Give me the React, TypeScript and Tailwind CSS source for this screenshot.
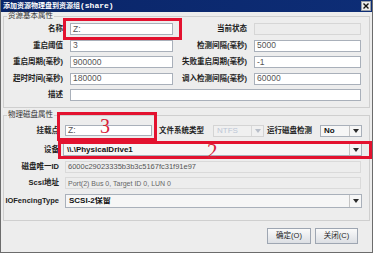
import type { ReactNode } from "react";

const font = "font-['Liberation_Sans','Noto_Sans_CJK_SC',sans-serif]";

function Label({ children, className }: { children: ReactNode; className: string }) {
  return (
    <span className={`shrink-0 whitespace-nowrap text-right text-[7.5px] font-bold leading-none text-[#222] ${className}`}>
      {children}
    </span>
  );
}

function Field({ value, className }: { value?: string; className: string }) {
  return (
    <div className={`flex shrink-0 items-center border border-[#a9b0ba] bg-white pl-[2px] text-[8.5px] leading-none text-[#555] ${className}`}>
      {value}
    </div>
  );
}

function Arrow({ dim }: { dim?: boolean }) {
  return (
    <div className={`flex h-full w-[12px] shrink-0 items-center justify-center border-l ${dim ? "border-[#d8d8d8]" : "border-[#c4c4c4]"}`}>
      <svg width="6" height="4" viewBox="0 0 6 4">
        <path d="M0 0h6L3 4z" fill={dim ? "#b8bec8" : "#2a2a2a"} />
      </svg>
    </div>
  );
}

function Combo({ value, className, dim }: { value: string; className: string; dim?: boolean }) {
  return (
    <div className={`flex shrink-0 items-center border ${dim ? "border-[#d4d4d4] bg-[#f0f0f0]" : "border-[#a9b0ba] bg-[#f6f6f6]"} ${className}`}>
      <span className={`flex-1 truncate pl-[3px] text-[8px] leading-none ${dim ? "text-[#bcc6d6]" : "font-bold text-[#111]"}`}>
        {value}
      </span>
      <Arrow dim={dim} />
    </div>
  );
}

export default function App() {
  return (
    <div className={`relative h-[253px] w-[374px] overflow-hidden bg-white ${font}`}>
      <div className="flex h-[253px] w-[373px] flex-col border-x border-b border-[#6c6c6c] bg-[#ededed]">
        {/* title bar */}
        <div className="flex h-[12px] shrink-0 items-center justify-between bg-gradient-to-r from-[#0a2568] to-[#0d2d76] pl-[2px] pr-[1px]">
          <span className="whitespace-nowrap text-[7px] font-bold leading-none text-white">
            添加资源物理盘到资源组
            <span className="font-['Liberation_Mono',monospace] text-[8px]">(share)</span>
          </span>
          <div className="flex h-[10px] w-[10px] items-center justify-center border border-[#9aa0a8] bg-[#ececec]">
            <svg width="6" height="6" viewBox="0 0 6 6">
              <path d="M0.5 0.5L5.5 5.5M5.5 0.5L0.5 5.5" stroke="#111" strokeWidth="1.4" />
            </svg>
          </div>
        </div>

        <div className="flex flex-col px-[2px]">
          {/* section 1 */}
          <fieldset className="h-[96px] border border-[#cfcfcf] pt-[3px]">
            <legend className="ml-[3px] px-[1px] text-[7.5px] leading-[8px] text-[#333]">资源基本属性</legend>
            <div className="flex flex-col gap-[4.5px]">
              <div className="flex h-[12px] items-center">
                <Label className="w-[59px]">名称</Label>
                <Field className="ml-[7px] h-[12px] w-[103px]" value="Z:" />
                <Label className="w-[74px]">当前状态</Label>
                <div className="ml-[7px] h-[12px] w-[107px] border border-[#d6d6d6] bg-[#ececec]" />
              </div>
              <div className="flex h-[12px] items-center">
                <Label className="w-[59px]">重启阈值</Label>
                <Field className="ml-[7px] h-[12px] w-[103px]" value="3" />
                <Label className="w-[74px]">检测间隔(毫秒)</Label>
                <Field className="ml-[7px] h-[12px] w-[107px]" value="5000" />
              </div>
              <div className="flex h-[12px] items-center">
                <Label className="w-[59px]">重启周期(毫秒)</Label>
                <Field className="ml-[7px] h-[12px] w-[103px]" value="900000" />
                <Label className="w-[74px]">失败重启周期(毫秒)</Label>
                <Field className="ml-[7px] h-[12px] w-[107px]" value="-1" />
              </div>
              <div className="flex h-[12px] items-center">
                <Label className="w-[59px]">超时时间(毫秒)</Label>
                <Field className="ml-[7px] h-[12px] w-[103px]" value="180000" />
                <Label className="w-[74px]">调入检测间隔(毫秒)</Label>
                <Field className="ml-[7px] h-[12px] w-[107px]" value="60000" />
              </div>
              <div className="flex h-[12px] items-center">
                <Label className="w-[59px]">描述</Label>
                <Field className="ml-[7px] h-[12px] w-[291px]" />
              </div>
            </div>
          </fieldset>

          {/* section 2 */}
          <fieldset className="mt-[3px] h-[110px] border border-[#cfcfcf] pt-[6px]">
            <legend className="ml-[3px] px-[1px] text-[7.5px] leading-[8px] text-[#333]">物理磁盘属性</legend>
            <div className="flex h-[11px] items-center">
              <Label className="w-[55px]">挂载点</Label>
              <Field className="ml-[6px] h-[11px] w-[87px]" value="Z:" />
              <Label className="w-[52px]">文件系统类型</Label>
              <Combo className="ml-[9px] h-[12px] w-[51px]" value="NTFS" dim />
              <Label className="w-[48px]">运行磁盘检测</Label>
              <Combo className="ml-[8px] h-[12px] w-[42px]" value="No" />
            </div>
            <div className="mt-[7px] flex h-[13px] items-center">
              <Label className="w-[55px]">设备</Label>
              <Combo className="ml-[4px] h-[13px] w-[299px]" value={"\\\\.\\PhysicalDrive1"} />
            </div>
            <div className="mt-[5px] flex h-[12px] items-center">
              <Label className="w-[55px]">磁盘唯一ID</Label>
              <div className="ml-[6px] flex h-[12px] w-[296px] items-center border border-[#dadada] pl-[2px] text-[7.5px] leading-none text-[#555]">
                6000c29023335b3b3c5167fc31f91e97
              </div>
            </div>
            <div className="mt-[4px] flex h-[12px] items-center">
              <Label className="w-[55px]">Scsi地址</Label>
              <div className="ml-[6px] flex h-[12px] w-[296px] items-center border border-[#dadada] pl-[2px] text-[7px] leading-none text-[#666]">
                Port(2) Bus 0, Target ID 0, LUN 0
              </div>
            </div>
            <div className="mt-[5px] flex h-[14px] items-center">
              <Label className="w-[55px]">IOFencingType</Label>
              <Combo className="ml-[6px] h-[14px] w-[297px]" value="SCSI-2保留" />
            </div>
          </fieldset>
        </div>

        {/* buttons */}
        <div className="flex flex-1 items-center justify-end gap-[4px] pb-[2px] pr-[14px]">
          <button className="flex h-[16px] w-[44px] items-center justify-center border border-[#9ea6b2] bg-gradient-to-b from-[#fafafa] to-[#dcdfe4] text-[7.5px] leading-none text-[#222]">
            确定(O)
          </button>
          <button className="flex h-[16px] w-[43px] items-center justify-center border border-[#9ea6b2] bg-gradient-to-b from-[#fafafa] to-[#dcdfe4] text-[7.5px] leading-none text-[#222]">
            关闭(C)
          </button>
        </div>
      </div>

      {/* red annotations */}
      <div className="absolute left-[63px] top-[18px] h-[22px] w-[119px] border-[3px] border-[#e3122f]" />
      <div className="absolute left-[57px] top-[112px] h-[29px] w-[100px] border-[3px] border-[#e3122f]" />
      <div className="absolute left-[58px] top-[141px] h-[18px] w-[314px] border-[3px] border-[#e3122f]" />
      <span className="absolute left-[100px] top-[114px] font-['Liberation_Serif',serif] text-[20px] leading-[24px] text-[#d8213a]">3</span>
      <span className="absolute left-[207px] top-[139px] font-['Liberation_Serif',serif] text-[21px] leading-[24px] text-[#d8213a]">2</span>
    </div>
  );
}
